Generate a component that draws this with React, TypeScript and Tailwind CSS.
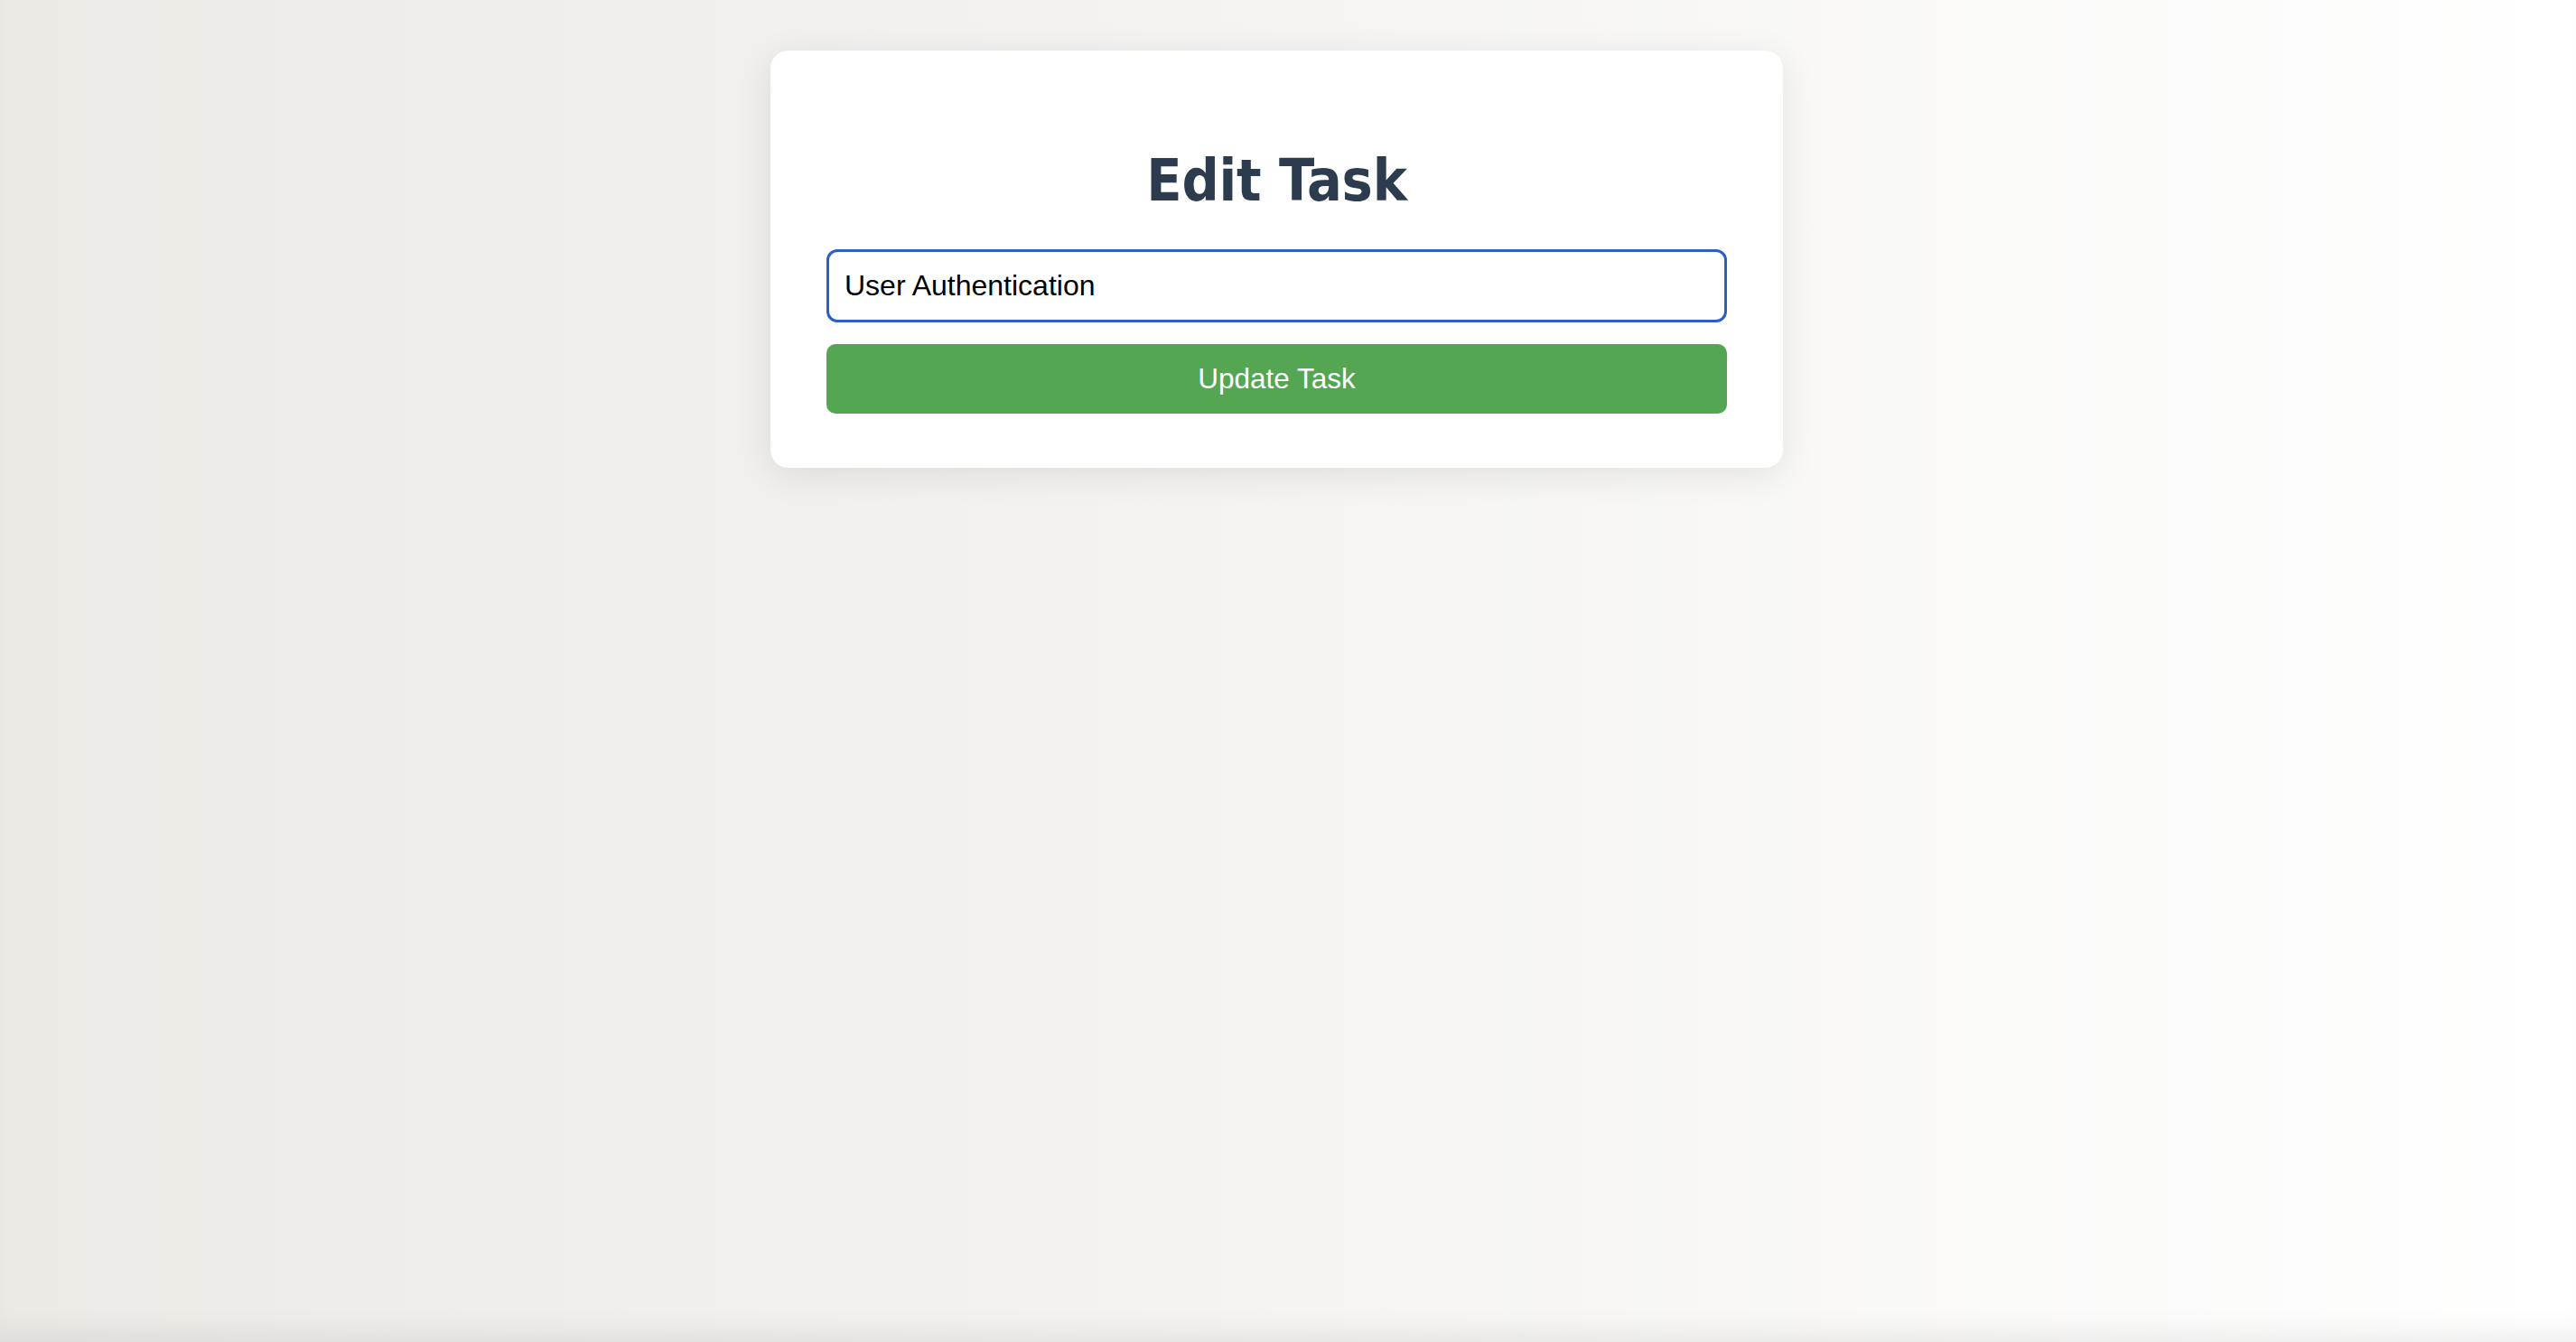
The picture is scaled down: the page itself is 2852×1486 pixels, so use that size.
import { useState } from "react";

export default function App() {
  const [title, setTitle] = useState("User Authentication");

  return (
    <div className="min-h-screen w-full bg-gradient-to-r from-[#edeae6] via-[#f5f4f2] to-[#ffffff] shadow-[inset_0_-28px_30px_-18px_rgba(0,0,0,0.07)]">
      <div className="flex justify-center pr-[25px] pt-[56px]">
        <div className="w-[1121px] rounded-[20px] bg-white px-[62px] pt-[106px] pb-[60px] shadow-[0_8px_40px_rgba(0,0,0,0.09)]">
          <h1 className="m-0 text-center font-['DejaVu_Sans_Condensed','DejaVu_Sans',sans-serif] font-stretch-condensed text-[64px] leading-[77px] font-bold tracking-[-0.2px] text-[#2d3b4e]">
            Edit Task
          </h1>
          <form
            className="mt-[37px] flex flex-col gap-[24px]"
            onSubmit={(e) => e.preventDefault()}
          >
            <input
              value={title}
              onChange={(e) => setTitle(e.target.value)}
              className="box-border h-[81px] w-full rounded-[12px] border-[3px] border-[#2b5fc6] bg-white pl-[17px] font-['Liberation_Sans',Arial,sans-serif] text-[32px] text-black outline-none"
            />
            <button
              type="submit"
              className="h-[77px] w-full rounded-[10px] bg-[#54a653] font-['Liberation_Sans',Arial,sans-serif] text-[31.5px] text-white"
            >
              Update Task
            </button>
          </form>
        </div>
      </div>
    </div>
  );
}
